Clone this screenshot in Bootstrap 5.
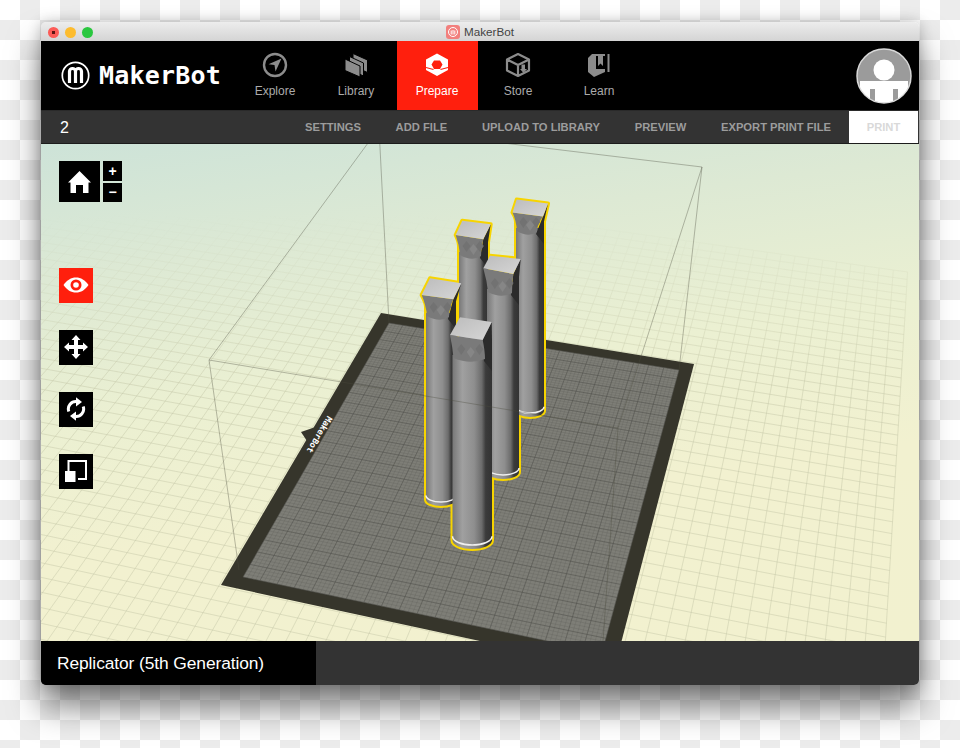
<!DOCTYPE html>
<html lang="en">
<head>
    <meta charset="UTF-8">
    <meta name="viewport" content="width=device-width, initial-scale=1.0">
    <title>MakerBot</title>
    <link rel="stylesheet" href="https://cdn.jsdelivr.net/npm/bootstrap@5.3.2/dist/css/bootstrap.min.css">
    <style>
        html, body { height: 748px; overflow: hidden; }
        body {
            background-color: #fff;
            background-image: conic-gradient(#ececec 25%, #fff 25% 50%, #ececec 50% 75%, #fff 75%);
            background-size: 40px 40px;
            background-position: 0 0;
            font-family: "Liberation Sans", Arial, sans-serif;
        }
        .app-window {
            width: 878px;
            height: 663px;
            margin: 22px 0 0 41px;
            border-radius: 5px;
            overflow: hidden;
        }
        .app-shadow {
            width: 878px;
            box-shadow: 0 22px 32px rgba(0, 0, 0, .5), 0 0 14px rgba(0, 0, 0, .22);
            border-radius: 5px;
        }
        .title-bar {
            height: 19px;
            background: linear-gradient(#ededed, #d4d4d4);
            position: relative;
            font-size: 11.7px;
            color: #444;
        }
        .traffic { width: 11px; height: 11px; border-radius: 50%; }
        .traffic-red { background: radial-gradient(#5a1512 0 1.5px, #fc5b57 2px); }
        .traffic-yellow { background: #fdbc2e; }
        .traffic-green { background: #2ac73f; }
        .traffic-row { gap: 6px; padding-left: 7px; position: absolute; left: 0; top: 5px; }
        .top-bar { height: 69px; background: #000; }
        .brand-area { width: 193.5px; padding-left: 20px; gap: 9px; }
        .brand-word {
            font: 700 25px "DejaVu Sans Mono", monospace;
            color: #fff;
            letter-spacing: .2px;
            white-space: nowrap;
        }
        .top-nav .nav-link {
            width: 81px;
            height: 69px;
            padding: 11px 0 0;
            text-align: center;
            font-size: 12px;
            color: #ababab;
        }
        .top-nav .nav-link svg { display: block; margin: 0 auto 4px; }
        .top-nav .nav-link.active { background: #ff1f0d; color: #fff; }
        .avatar-pic { margin-right: 7px; }
        .sub-bar {
            height: 34px;
            background: #333;
            border-top: 1px solid #2a2a2a;
            border-bottom: 1px solid #1c1c1c;
            padding-left: 19px;
            color: #fff;
            font-size: 16px;
        }
        .sub-count { padding-top: 1px; }
        .sub-links { gap: 34.7px; margin-right: 18px; padding-top: 1px; }
        .sub-links a {
            font-size: 11.2px;
            font-weight: 700;
            color: #9c9c9c;
            text-decoration: none;
        }
        .print-btn {
            width: 69px;
            height: 32px;
            margin-right: 1px;
            background: #fff;
            border: 0;
            border-radius: 0;
            font-size: 11.2px;
            font-weight: 700;
            color: #d9d9d9;
            padding: 1px 0 0;
        }
        .print-btn:disabled { background: #fff; color: #d9d9d9; opacity: 1; }
        .stage {
            height: 497px;
            position: relative;
            overflow: hidden;
            background: linear-gradient(172deg, #cde3d8 0%, #dde9d4 22%, #ebf0d2 45%, #f2f1d0 68%, #f2f1cf 100%);
        }
        .stage > svg { display: block; }
        .tool-rail { position: absolute; left: 18px; top: 17px; }
        .tool-zoom { gap: 3px; margin-bottom: 66px; }
        .tool-home { width: 41px; height: 41px; background: #000; }
        .tool-step {
            width: 19px;
            height: 19.5px;
            background: #000;
            color: #fff;
            font-size: 14px;
            font-weight: 700;
            line-height: 1;
        }
        .tool-steps { gap: 2px; }
        .tool-list { gap: 27.5px; }
        .tool-btn { width: 34px; height: 34.5px; background: #000; }
        .tool-btn.on { background: #ff1f0d; }
        .foot-bar { height: 44px; background: #333; }
        .foot-name {
            width: 275px;
            background: #000;
            color: #fff;
            font-size: 17.4px;
            padding: 1px 0 0 16px;
            letter-spacing: -.1px;
        }
    </style>
</head>
<body>
    <div class="app-shadow app-window d-flex flex-column">
        <div class="title-bar d-flex justify-content-center align-items-center">
            <div class="traffic-row d-flex">
                <span class="traffic traffic-red"></span>
                <span class="traffic traffic-yellow"></span>
                <span class="traffic traffic-green"></span>
            </div>
            <svg width="14" height="14" viewBox="0 0 14 14" class="me-1">
                <rect width="14" height="14" rx="3" fill="#f27f7d"/>
                <circle cx="7" cy="7" r="4.5" fill="none" stroke="#fff" stroke-width="1"/>
                <path d="M5.2 9.5V5.5M7 9.5V5M8.8 9.5V5.5" stroke="#fff" stroke-width="1"/>
            </svg>
            <span>MakerBot</span>
        </div>

        <div class="top-bar d-flex align-items-stretch">
            <div class="brand-area d-flex align-items-center">
                <svg width="29" height="29" viewBox="0 0 29 29" class="flex-shrink-0">
                    <circle cx="14.5" cy="14.5" r="13.2" fill="none" stroke="#fff" stroke-width="1.7"/>
                    <path d="M8.5 22V10.5a3 3 0 0 1 6 0V22M14.5 10.5a3 3 0 0 1 6 0V22" fill="none" stroke="#fff" stroke-width="3.2"/>
                </svg>
                <span class="brand-word">MakerBot</span>
            </div>
            <nav class="nav top-nav flex-nowrap">
                <a class="nav-link" href="#">
                    <svg width="26" height="26" viewBox="0 0 26 26">
                        <circle cx="13" cy="13" r="11" fill="none" stroke="#8c8c8c" stroke-width="2.4"/>
                        <path d="M19.5 6.5 6.5 12.2l6 .9 1 6.4z" fill="#8c8c8c"/>
                    </svg>
                    Explore
                </a>
                <a class="nav-link" href="#">
                    <svg width="26" height="26" viewBox="0 0 26 26">
                        <path d="M10 1.5 24.5 8v12.5L10 14z" fill="#8c8c8c" stroke="#000"/>
                        <path d="M6.5 4.5 20.5 11v13L6.5 17.5z" fill="#8c8c8c" stroke="#000"/>
                        <path d="M2 7 17 14v11L2 18.5z" fill="#8c8c8c" stroke="#000"/>
                    </svg>
                    Library
                </a>
                <a class="nav-link active" href="#">
                    <svg width="26" height="26" viewBox="0 0 26 26">
                        <path fill-rule="evenodd" d="M13 1.500 24 7.500V18L13 24 2 18V7.500zM10 8.500H16L18.500 12.500 16 17H10L7.500 12.500z" fill="#fff"/>
                        <path d="M9.500 17.500 2 15.500M16.500 17.500 24 15.500" stroke="#ff1f0d" stroke-width="1.200"/>
                    </svg>
                    Prepare
                </a>
                <a class="nav-link" href="#">
                    <svg width="26" height="26" viewBox="0 0 26 26">
                        <path d="M13 2 24 7.500V18.500L13 24 2 18.500V7.500zM2 7.500 13 13 24 7.500M13 13V24" fill="none" stroke="#8c8c8c" stroke-width="2.200" stroke-linejoin="round"/>
                        <path d="M16.500 12.500h3.500v4.500h2l-3.500 4-3.500-4h1.500z" fill="#8c8c8c"/>
                    </svg>
                    Store
                </a>
                <a class="nav-link" href="#">
                    <svg width="26" height="26" viewBox="0 0 26 26">
                        <path d="M2 6 6 2H19V20L8 25 2 20z" fill="#8c8c8c"/>
                        <path d="M10 4H19V17H10z" fill="#000"/>
                        <path d="M12 4H17V14L14.500 11.500 12 14z" fill="#8c8c8c"/>
                        <path d="M22.500 2V20" stroke="#8c8c8c" stroke-width="2"/>
                    </svg>
                    Learn
                </a>
            </nav>
            <div class="ms-auto d-flex align-items-center avatar-pic">
                <svg width="56" height="56" viewBox="0 0 56 56">
                    <defs><clipPath id="avatarClip"><circle cx="28" cy="28" r="26.500"/></clipPath></defs>
                    <circle cx="28" cy="28" r="27" fill="#9b9b9b" stroke="#d8d8d8" stroke-width="1.500"/>
                    <g clip-path="url(#avatarClip)">
                        <circle cx="28" cy="22" r="10.500" fill="#fff"/>
                        <path d="M4 33H52V56H4z" fill="#fff"/>
                        <path d="M14 41h5v15h-5zM37 41h5v15h-5z" fill="#9b9b9b"/>
                    </g>
                </svg>
            </div>
        </div>

        <div class="sub-bar d-flex align-items-center">
            <span class="sub-count">2</span>
            <div class="sub-links d-flex ms-auto">
                <a href="#">SETTINGS</a>
                <a href="#">ADD FILE</a>
                <a href="#">UPLOAD TO LIBRARY</a>
                <a href="#">PREVIEW</a>
                <a href="#">EXPORT PRINT FILE</a>
            </div>
            <button class="btn print-btn" disabled>PRINT</button>
        </div>

        <div class="stage">
            <svg id="scene" width="878" height="497" viewBox="41 144 878 497">
                <defs>
                    <linearGradient id="fadeFloor" gradientUnits="userSpaceOnUse" x1="0" y1="215" x2="0" y2="380">
                        <stop offset="0" stop-color="#000"/>
                        <stop offset="1" stop-color="#fff"/>
                    </linearGradient>
                    <mask id="floorMask" maskUnits="userSpaceOnUse" x="41" y="144" width="878" height="497">
                        <rect x="41" y="144" width="878" height="497" fill="url(#fadeFloor)"/>
                    </mask>
                    <linearGradient id="shaftShade" x1="0" y1="0" x2="1" y2="0">
                        <stop offset="0" stop-color="#787878"/>
                        <stop offset=".25" stop-color="#a0a0a0"/>
                        <stop offset=".55" stop-color="#8e8e8e"/>
                        <stop offset=".74" stop-color="#6c6c6c"/>
                        <stop offset=".84" stop-color="#3b3b3b"/>
                        <stop offset="1" stop-color="#333"/>
                    </linearGradient>
                    <linearGradient id="capTop" x1="0" y1="0" x2="1" y2="1">
                        <stop offset="0" stop-color="#bcbcbc"/>
                        <stop offset="1" stop-color="#d6d6d6"/>
                    </linearGradient>
                </defs>
                <g id="floorGrid" mask="url(#floorMask)"></g>
                <polygon points="381,313 694,364 614,670 221,585" fill="#36352b"/>
                <polygon points="389,323 679,370 602,652.500 243,577" fill="#7e7e77"/>
                <g id="plateGrid"></g>
                <polygon points="301,432 317,426.500 309,444" fill="#36352b"/>
                <text x="0" y="0" transform="translate(327.500,415.500) rotate(121)" font-family="DejaVu Sans Mono, monospace" font-weight="700" font-size="8.500" fill="#fff">MakerBot</text>
                <g id="columns"></g>
                <path d="M209 360 379 128 702 167 618 428 209 360 239 570M379 128 389 323M702 167 679 370M618 428 603 641" fill="none" stroke="#4a4a3c" stroke-opacity=".36" stroke-width="1"/>
            </svg>

            <div class="tool-rail">
                <div class="tool-zoom d-flex">
                    <div class="tool-home d-flex align-items-center justify-content-center">
                        <svg width="25" height="24" viewBox="0 0 25 24"><path d="M12.500 1 24 12.500H21.500V23H16V15H9V23H3.500V12.500H1z" fill="#fff"/></svg>
                    </div>
                    <div class="tool-steps d-flex flex-column">
                        <div class="tool-step d-flex align-items-center justify-content-center">+</div>
                        <div class="tool-step d-flex align-items-center justify-content-center">−</div>
                    </div>
                </div>
                <div class="tool-list d-flex flex-column">
                    <div class="tool-btn on d-flex align-items-center justify-content-center">
                        <svg width="26" height="16" viewBox="0 0 26 16">
                            <path d="M0.500 8C4 3 8 .5 13 .5S22 3 25.500 8C22 13 18 15.500 13 15.500S4 13 .5 8z" fill="#fff"/>
                            <circle cx="13" cy="8" r="5.500" fill="#ff1f0d"/>
                            <circle cx="13" cy="8" r="2.800" fill="#fff"/>
                        </svg>
                    </div>
                    <div class="tool-btn d-flex align-items-center justify-content-center">
                        <svg width="24" height="24" viewBox="0 0 24 24"><path d="M12 0 16.500 5H14V10H19V7.500L24 12 19 16.500V14H14V19H16.500L12 24 7.500 19H10V14H5V16.500L0 12 5 7.500V10H10V5H7.500z" fill="#fff"/></svg>
                    </div>
                    <div class="tool-btn d-flex align-items-center justify-content-center">
                        <svg width="20" height="24" viewBox="0 0 20 24">
                            <path d="M2.800 14.500A7.500 7.500 0 0 1 11 4.600" fill="none" stroke="#fff" stroke-width="3"/>
                            <path d="M10 .2 16 5 10 9.500z" fill="#fff"/>
                            <path d="M17.200 9.500A7.500 7.500 0 0 1 9 19.400" fill="none" stroke="#fff" stroke-width="3"/>
                            <path d="M10 14.500 4 19 10 23.800z" fill="#fff"/>
                        </svg>
                    </div>
                    <div class="tool-btn d-flex align-items-center justify-content-center">
                        <svg width="22" height="22" viewBox="0 0 22 22">
                            <path d="M3.500 11V1H21V19H13" fill="none" stroke="#fff" stroke-width="2"/>
                            <path d="M0 11H10.500V22H0z" fill="#fff"/>
                        </svg>
                    </div>
                </div>
            </div>
        </div>

        <div class="foot-bar d-flex">
            <div class="foot-name d-flex align-items-center">Replicator (5th Generation)</div>
        </div>
    </div>

    <script src="https://cdn.jsdelivr.net/npm/bootstrap@5.3.2/dist/js/bootstrap.bundle.min.js"></script>
    <script>
        document.addEventListener("DOMContentLoaded", () => {
            // plate corners on screen -> perspective map of the build plate
            const quadMap = (p0, p1, p2, p3) => {
                const sx = p0[0] - p1[0] + p2[0] - p3[0], sy = p0[1] - p1[1] + p2[1] - p3[1];
                const dx1 = p1[0] - p2[0], dx2 = p3[0] - p2[0], dy1 = p1[1] - p2[1], dy2 = p3[1] - p2[1];
                const den = dx1 * dy2 - dx2 * dy1;
                const g = (sx * dy2 - dx2 * sy) / den, h = (dx1 * sy - sx * dy1) / den;
                const a = p1[0] - p0[0] + g * p1[0], b = p3[0] - p0[0] + h * p3[0];
                const d = p1[1] - p0[1] + g * p1[1], e = p3[1] - p0[1] + h * p3[1];
                return (u, v) => {
                    const w = g * u + h * v + 1;
                    return [(a * u + b * v + p0[0]) / w, (d * u + e * v + p0[1]) / w];
                };
            };
            const map = quadMap([389, 323], [679, 370], [602, 652.5], [243, 577]);

            const gridLines = (uFrom, uTo, vFrom, vTo, step, color, opacity) => {
                let out = "";
                const seg = (a, b) => `<line x1="${a[0].toFixed(1)}" y1="${a[1].toFixed(1)}" x2="${b[0].toFixed(1)}" y2="${b[1].toFixed(1)}"/>`;
                for (let i = uFrom; i <= uTo + 1e-6; i += step) out += seg(map(i / 20, vFrom / 25), map(i / 20, vTo / 25));
                for (let j = vFrom; j <= vTo + 1e-6; j += step) out += seg(map(uFrom / 20, j / 25), map(uTo / 20, j / 25));
                return `<g stroke="${color}" stroke-opacity="${opacity}" stroke-width="1">${out}</g>`;
            };

            document.getElementById("floorGrid").innerHTML = gridLines(-36, 34, -16, 36, 1, "#bfc1a2", 0.42);
            document.getElementById("plateGrid").innerHTML =
                gridLines(0, 20, 0, 25, 0.25, "#55554f", 0.2) + gridLines(0, 20, 0, 25, 1, "#4f4f4a", 0.42);

            // top quad (back-left, back-right, front-right, front-left), capital bottom, shaft sides, lowest point
            const columns = [
                { q: [[516.7, 199.5], [548, 203.5], [543, 216.5], [512.5, 212.5]], capY: 234, l: 516, r: 544, bottom: 417 },
                { q: [[462.3, 220.7], [490.7, 224.3], [483.3, 239.3], [455.7, 235]], capY: 258, l: 459, r: 488, bottom: 420 },
                { q: [[490, 255.7], [520.7, 259], [513.3, 274], [483.3, 268.3]], capY: 295, l: 487, r: 519, bottom: 479 },
                { q: [[430, 278.3], [461.3, 283.3], [453.3, 299.3], [421.7, 295]], capY: 319, l: 426, r: 456, bottom: 506 },
                { q: [[460, 317.3], [491.7, 322], [482.7, 340], [450, 335]], capY: 361, l: 452.5, r: 492, bottom: 549 }
            ];
            const pt = p => `${p[0]} ${p[1]}`;

            const silhouette = c => {
                const [a, b, , d] = c.q, ry = (c.r - c.l) * 0.22, rx = (c.r - c.l) / 2;
                return `M${pt(a)}L${pt(b)}L${c.r} ${b[1] + 18}V${c.bottom - ry}A${rx} ${ry} 0 0 1 ${c.l} ${c.bottom - ry}V${c.capY - 12}Q${c.l} ${c.capY - 16} ${pt(d)}Z`;
            };

            const bodyOf = c => {
                const [a, b, e, d] = c.q, ry = (c.r - c.l) * 0.22, rx = (c.r - c.l) / 2, w = c.r - c.l, top = c.capY - 6;
                const yb = c.bottom - ry;
                const facets = [0.12, 0.36, 0.58].map((f, i) => {
                    const x = c.l + w * f, y = c.capY - 12 + (i === 1 ? 3 : 0);
                    return `<path d="M${x} ${y}l4 -5 4 5 -4 6z" fill="${i === 1 ? "#868686" : "#727272"}"/>`;
                }).join("");
                return `
                    <path d="M${c.l} ${top}H${c.r}V${yb}A${rx} ${ry} 0 0 1 ${c.l} ${yb}Z" fill="url(#shaftShade)"/>
                    <path d="M${c.l} ${yb - 4}A${rx} ${ry} 0 0 0 ${c.r} ${yb - 4}" fill="none" stroke="#efefef" stroke-width="1.5"/>
                    <path d="M${pt(e)}L${pt(b)}L${c.r} ${b[1] + 18}V${c.capY + 10}L${c.r - 8} ${c.capY}Z" fill="#2b2b2b"/>
                    <path d="M${pt(d)}L${pt(e)}Q${c.r - 7} ${c.capY - 10} ${c.r - 7} ${c.capY - 2}Q${c.l + w * 0.45} ${c.capY + 4} ${c.l + 1} ${c.capY - 3}Q${c.l} ${c.capY - 14} ${pt(d)}Z" fill="#7a7a7a"/>
                    ${facets}
                    <path d="M${pt(a)}L${pt(b)}L${pt(e)}L${pt(d)}Z" fill="url(#capTop)"/>`;
            };

            document.getElementById("columns").innerHTML =
                columns.map(c => `<path d="${silhouette(c)}" fill="#f7d400" stroke="#f7d400" stroke-width="4" stroke-linejoin="round"/>`).join("") +
                columns.map(bodyOf).join("");
        });
    </script>
</body>
</html>
